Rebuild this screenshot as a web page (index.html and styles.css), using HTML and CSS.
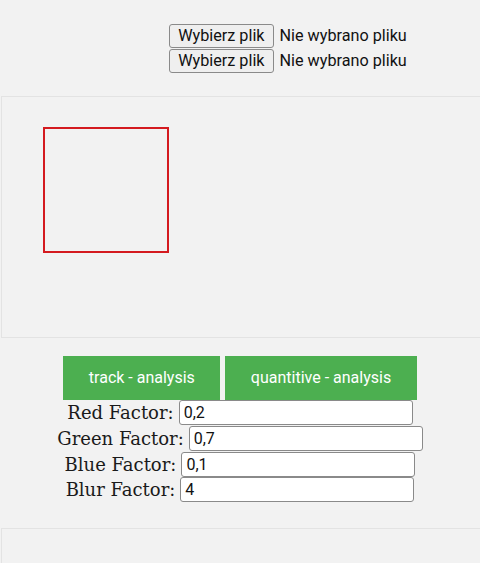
FILE: index.html
```html
<!DOCTYPE html>
<html lang="pl">
<head>
<meta charset="utf-8">
<title>Analysis</title>
<link rel="stylesheet" href="styles.css">
</head>
<body>
<div class="top">
  <div class="file-row"><span class="file-btn">Wybierz plik</span><span class="file-name">Nie wybrano pliku</span></div>
  <div class="file-row"><span class="file-btn">Wybierz plik</span><span class="file-name">Nie wybrano pliku</span></div>
</div>
<div class="canvas">
  <div class="square"></div>
</div>
<div class="actions">
  <button class="green">track - analysis</button>
  <button class="green">quantitive - analysis</button>
</div>
<div class="factors">
  <div class="row"><span class="lbl">Red Factor:</span><input class="field" type="text" value="0,2"></div>
  <div class="row"><span class="lbl">Green Factor:</span><input class="field" type="text" value="0,7"></div>
  <div class="row"><span class="lbl">Blue Factor:</span><input class="field" type="text" value="0,1"></div>
  <div class="row"><span class="lbl">Blur Factor:</span><input class="field" type="text" value="4"></div>
</div>
<div class="canvas bottom"></div>
</body>
</html>
```
FILE: styles.css
```css
html, body {
  margin: 0;
  padding: 0;
  background: #f2f2f2;
  overflow: hidden;
}
body {
  font-family: Roboto, "Liberation Sans", sans-serif;
  width: 480px;
  height: 563px;
}
.top {
  height: 96px;
  box-sizing: border-box;
  padding-top: 24px;
  display: flex;
  flex-direction: column;
  align-items: center;
  gap: 1px;
}
.file-row {
  display: flex;
  align-items: center;
  gap: 6px;
  height: 24px;
  font-size: 16.2px;
  color: #111;
  padding-left: 96px;
}
.file-btn {
  display: inline-block;
  box-sizing: border-box;
  height: 24px;
  line-height: 22px;
  padding: 0 8px;
  background: #efefef;
  border: 1px solid #8a8a8a;
  border-radius: 3px;
}
.file-name {
  line-height: 24px;
}
.canvas {
  height: 242px;
  box-sizing: border-box;
  margin-left: 1px;
  border-top: 1px solid #e3e3e3;
  border-left: 1px solid #e3e3e3;
  border-bottom: 1px solid #e3e3e3;
  padding: 30px 0 0 41px;
}
.square {
  width: 126px;
  height: 126px;
  box-sizing: border-box;
  border: 2px solid #d41a1f;
}
.actions {
  margin-top: 18px;
  display: flex;
  justify-content: center;
  gap: 5px;
}
.green {
  background: #4caf50;
  color: #fff;
  border: none;
  font-family: Roboto, "Liberation Sans", sans-serif;
  font-size: 16px;
  line-height: 20px;
  padding: 12px 25.5px;
}
.factors {
  display: flex;
  flex-direction: column;
  align-items: center;
}
.row {
  display: flex;
  align-items: center;
  gap: 5px;
  height: 25.7px;
}
.lbl {
  font-family: "DejaVu Serif", "Liberation Serif", serif;
  font-size: 18px;
  color: #1a1a1a;
}
.field {
  box-sizing: border-box;
  width: 234px;
  height: 25px;
  margin: 0;
  padding: 0 4px;
  font-family: Roboto, "Liberation Sans", sans-serif;
  font-size: 16px;
  color: #111;
  background: #fff;
  border: 1px solid #8a8a8a;
  border-radius: 3px;
}
.canvas.bottom {
  margin-top: 25px;
  border-bottom: none;
}
```
